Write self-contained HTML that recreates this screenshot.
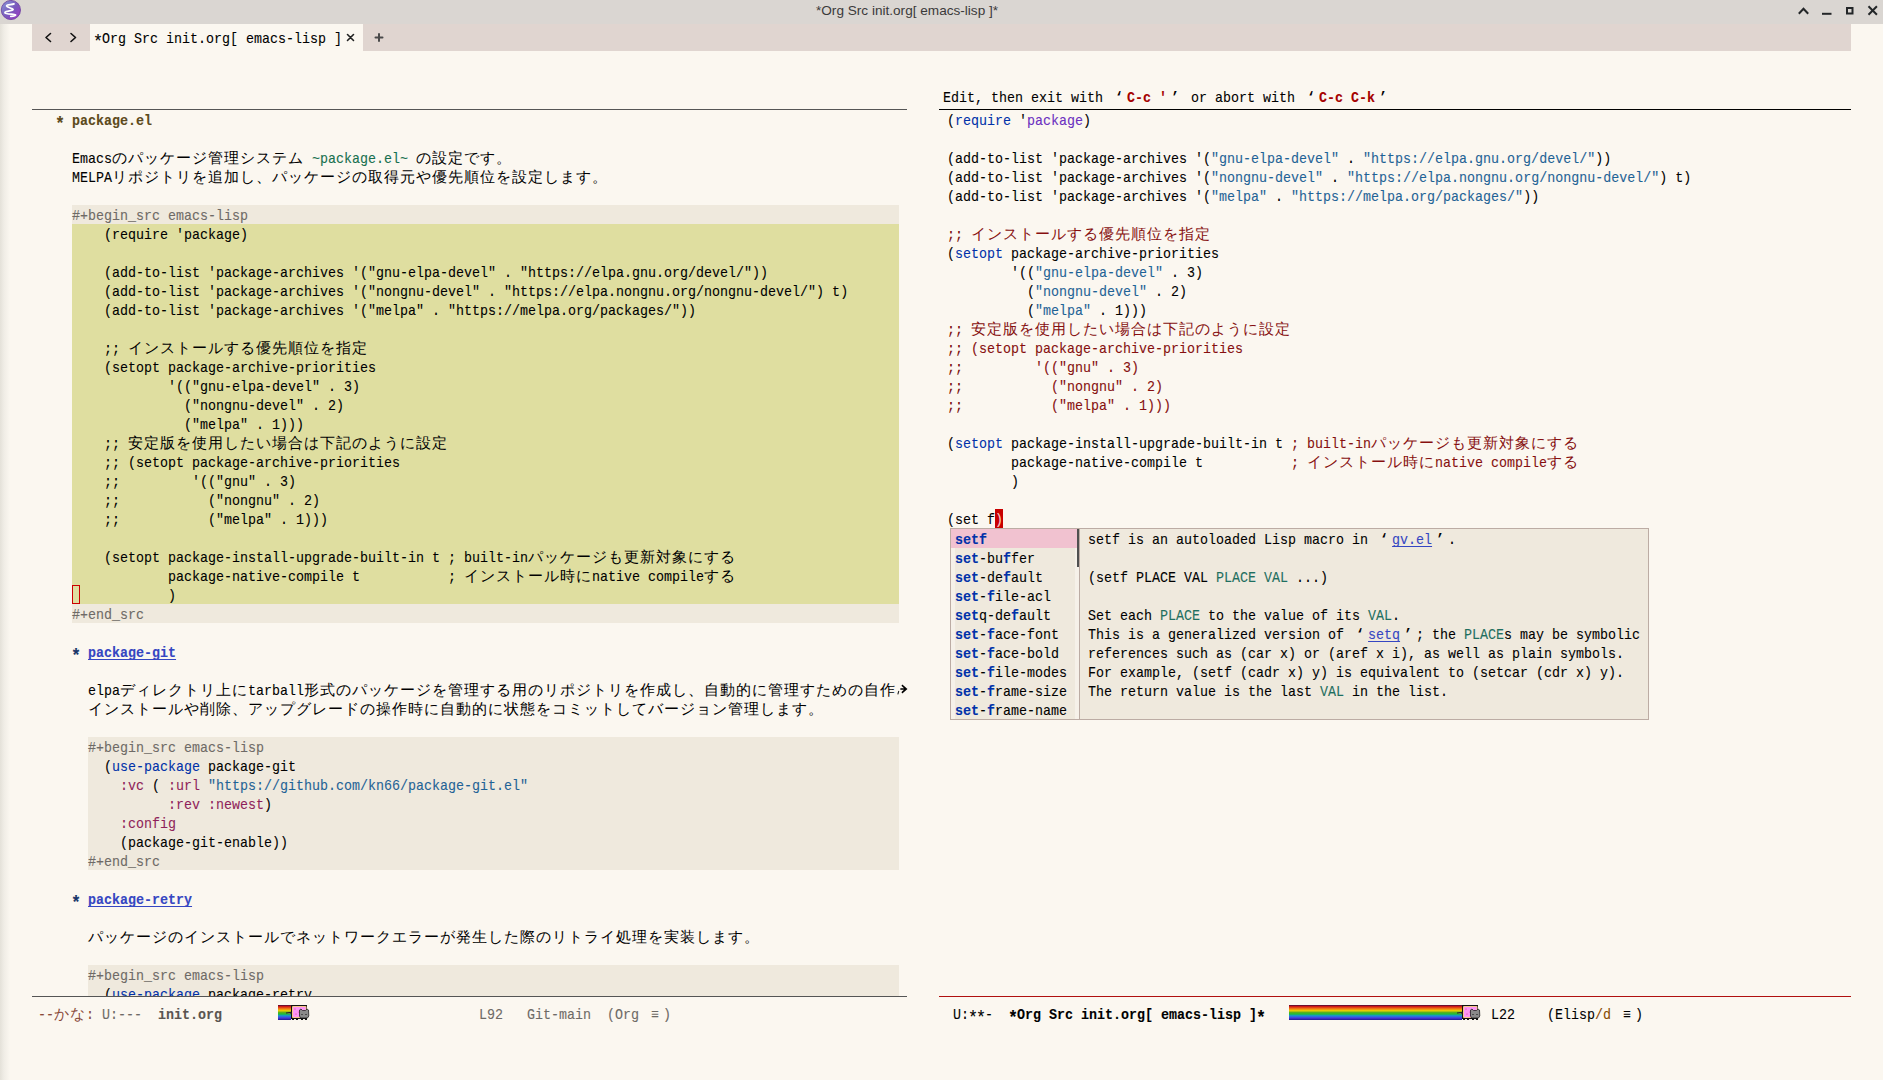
<!DOCTYPE html><html lang="ja"><head><meta charset="utf-8"><style>
*{margin:0;padding:0;box-sizing:border-box}
html,body{width:1883px;height:1080px;overflow:hidden;background:#fbf7f0}
body{position:relative;font-family:"Liberation Mono",monospace;font-size:15px;letter-spacing:0px;color:#000}
.abs{position:absolute}
.r{position:absolute;white-space:pre;height:19px;line-height:19px;padding-top:2px;transform:scaleX(0.888889);transform-origin:0 0;-webkit-text-stroke-width:0.1px}
.w{display:inline-block;width:18px;font-size:14.5px;letter-spacing:0;text-align:left;transform:scaleX(1.125);transform-origin:0 0;-webkit-text-stroke-width:0}
.ql{text-align:center;font-size:15px;transform:none}
.qr{text-align:center;font-size:15px;transform:none}
.qc{text-align:center;font-size:15px;transform:none}
.ql,.qr{font-weight:bold}
.h1s{color:#5d4a1c;font-weight:bold}
.star{display:inline-block;transform:translateY(3.5px) scale(1.25);transform-origin:50% 50%}
.h1{color:#5d4a1c;font-weight:bold}
.h1s2{color:#193668;font-weight:bold}
.h2{color:#3546c2;font-weight:bold;text-decoration:underline;text-decoration-skip-ink:none;text-underline-offset:2px}
.ver{color:#17704f}
.meta{color:#6e6a66}
.kw{color:#0031a9}
.sym{color:#6b2fc0}
.str{color:#1f6396}
.cst{color:#8f1f5a}
.cd{color:#7a0c0c}
.cm{color:#860f0f}
.cur{color:#f7c8c8}

.m{color:#0031a9;font-weight:bold}
.lnk{color:#3546c2;text-decoration:underline;text-decoration-skip-ink:none;text-underline-offset:2px}
.arg{color:#1f6f5f}
.key{color:#a60000;font-weight:bold}
.mlk{color:#8a4a3a}
.mli{color:#6e6a66}
.mlb{color:#5a5450;font-weight:bold}
.mlB{color:#000;font-weight:bold}
.mlY{color:#884900}
</style></head><body>
<div class="abs" style="left:0;top:0;width:1883px;height:24px;background:#dad6d2"></div>
<div class="abs" style="left:0;top:24px;width:10px;height:1056px;background:linear-gradient(to right,#e4e1d9,#f0ede6 40%,#fbf7f0)"></div>
<div class="abs" style="left:32px;top:24px;width:1819px;height:27px;background:#e0d5d0"></div>
<div class="abs" style="left:90px;top:24px;width:273px;height:27px;background:#fbf7f0"></div>
<div class="r" style="left:94px;top:28px"><span class="star">*</span>Org Src init.org[ emacs-lisp ]</div>
<div class="abs" style="left:32px;top:109px;width:875px;height:1px;background:#555"></div>
<div class="abs" style="left:939px;top:109px;width:912px;height:1px;background:#000"></div>
<div class="abs" style="left:72px;top:205px;width:827px;height:19px;background:#efe9dd"></div>
<div class="abs" style="left:72px;top:224px;width:827px;height:380px;background:#dfdea0"></div>
<div class="abs" style="left:72px;top:604px;width:827px;height:19px;background:#efe9dd"></div>
<div class="abs" style="left:88px;top:737px;width:811px;height:133px;background:#efe9dd"></div>
<div class="abs" style="left:88px;top:965px;width:811px;height:31px;background:#efe9dd"></div>
<div class="abs" style="left:72px;top:585px;width:8px;height:19px;border:1px solid #c00"></div>
<div class="abs" style="left:0;top:0;width:907px;height:996px;overflow:hidden">
<div class="r" style="left:56px;top:110px"><span class="h1s"><span class="star">*</span></span> <span class="h1">package.el</span></div>
<div class="r" style="left:72px;top:148px">Emacs<span class="w">の</span><span class="w">パ</span><span class="w">ッ</span><span class="w">ケ</span><span class="w">ー</span><span class="w">ジ</span><span class="w">管</span><span class="w">理</span><span class="w">シ</span><span class="w">ス</span><span class="w">テ</span><span class="w">ム</span> <span class="ver">~package.el~</span> <span class="w">の</span><span class="w">設</span><span class="w">定</span><span class="w">で</span><span class="w">す</span><span class="w">。</span></div>
<div class="r" style="left:72px;top:167px">MELPA<span class="w">リ</span><span class="w">ポ</span><span class="w">ジ</span><span class="w">ト</span><span class="w">リ</span><span class="w">を</span><span class="w">追</span><span class="w">加</span><span class="w">し</span><span class="w">、</span><span class="w">パ</span><span class="w">ッ</span><span class="w">ケ</span><span class="w">ー</span><span class="w">ジ</span><span class="w">の</span><span class="w">取</span><span class="w">得</span><span class="w">元</span><span class="w">や</span><span class="w">優</span><span class="w">先</span><span class="w">順</span><span class="w">位</span><span class="w">を</span><span class="w">設</span><span class="w">定</span><span class="w">し</span><span class="w">ま</span><span class="w">す</span><span class="w">。</span></div>
<div class="r" style="left:72px;top:205px"><span class="meta">#+begin_src emacs-lisp</span></div>
<div class="r" style="left:72px;top:224px">    (require 'package)</div>
<div class="r" style="left:72px;top:262px">    (add-to-list 'package-archives '("gnu-elpa-devel" . "https://elpa.gnu.org/devel/"))</div>
<div class="r" style="left:72px;top:281px">    (add-to-list 'package-archives '("nongnu-devel" . "https://elpa.nongnu.org/nongnu-devel/") t)</div>
<div class="r" style="left:72px;top:300px">    (add-to-list 'package-archives '("melpa" . "https://melpa.org/packages/"))</div>
<div class="r" style="left:72px;top:338px">    ;; <span class="w">イ</span><span class="w">ン</span><span class="w">ス</span><span class="w">ト</span><span class="w">ー</span><span class="w">ル</span><span class="w">す</span><span class="w">る</span><span class="w">優</span><span class="w">先</span><span class="w">順</span><span class="w">位</span><span class="w">を</span><span class="w">指</span><span class="w">定</span></div>
<div class="r" style="left:72px;top:357px">    (setopt package-archive-priorities</div>
<div class="r" style="left:72px;top:376px">            '(("gnu-elpa-devel" . 3)</div>
<div class="r" style="left:72px;top:395px">              ("nongnu-devel" . 2)</div>
<div class="r" style="left:72px;top:414px">              ("melpa" . 1)))</div>
<div class="r" style="left:72px;top:433px">    ;; <span class="w">安</span><span class="w">定</span><span class="w">版</span><span class="w">を</span><span class="w">使</span><span class="w">用</span><span class="w">し</span><span class="w">た</span><span class="w">い</span><span class="w">場</span><span class="w">合</span><span class="w">は</span><span class="w">下</span><span class="w">記</span><span class="w">の</span><span class="w">よ</span><span class="w">う</span><span class="w">に</span><span class="w">設</span><span class="w">定</span></div>
<div class="r" style="left:72px;top:452px">    ;; (setopt package-archive-priorities</div>
<div class="r" style="left:72px;top:471px">    ;;         '(("gnu" . 3)</div>
<div class="r" style="left:72px;top:490px">    ;;           ("nongnu" . 2)</div>
<div class="r" style="left:72px;top:509px">    ;;           ("melpa" . 1)))</div>
<div class="r" style="left:72px;top:547px">    (setopt package-install-upgrade-built-in t ; built-in<span class="w">パ</span><span class="w">ッ</span><span class="w">ケ</span><span class="w">ー</span><span class="w">ジ</span><span class="w">も</span><span class="w">更</span><span class="w">新</span><span class="w">対</span><span class="w">象</span><span class="w">に</span><span class="w">す</span><span class="w">る</span></div>
<div class="r" style="left:72px;top:566px">            package-native-compile t           ; <span class="w">イ</span><span class="w">ン</span><span class="w">ス</span><span class="w">ト</span><span class="w">ー</span><span class="w">ル</span><span class="w">時</span><span class="w">に</span>native compile<span class="w">す</span><span class="w">る</span></div>
<div class="r" style="left:72px;top:585px">            )</div>
<div class="r" style="left:72px;top:604px"><span class="meta">#+end_src</span></div>
<div class="r" style="left:72px;top:642px"><span class="h1s2"><span class="star">*</span></span> <span class="h2">package-git</span></div>
<div class="r" style="left:88px;top:680px">elpa<span class="w">デ</span><span class="w">ィ</span><span class="w">レ</span><span class="w">ク</span><span class="w">ト</span><span class="w">リ</span><span class="w">上</span><span class="w">に</span>tarball<span class="w">形</span><span class="w">式</span><span class="w">の</span><span class="w">パ</span><span class="w">ッ</span><span class="w">ケ</span><span class="w">ー</span><span class="w">ジ</span><span class="w">を</span><span class="w">管</span><span class="w">理</span><span class="w">す</span><span class="w">る</span><span class="w">用</span><span class="w">の</span><span class="w">リ</span><span class="w">ポ</span><span class="w">ジ</span><span class="w">ト</span><span class="w">リ</span><span class="w">を</span><span class="w">作</span><span class="w">成</span><span class="w">し</span><span class="w">、</span><span class="w">自</span><span class="w">動</span><span class="w">的</span><span class="w">に</span><span class="w">管</span><span class="w">理</span><span class="w">す</span><span class="w">た</span><span class="w">め</span><span class="w">の</span><span class="w">自</span><span class="w">作</span></div>
<div class="r" style="left:88px;top:699px"><span class="w">イ</span><span class="w">ン</span><span class="w">ス</span><span class="w">ト</span><span class="w">ー</span><span class="w">ル</span><span class="w">や</span><span class="w">削</span><span class="w">除</span><span class="w">、</span><span class="w">ア</span><span class="w">ッ</span><span class="w">プ</span><span class="w">グ</span><span class="w">レ</span><span class="w">ー</span><span class="w">ド</span><span class="w">の</span><span class="w">操</span><span class="w">作</span><span class="w">時</span><span class="w">に</span><span class="w">自</span><span class="w">動</span><span class="w">的</span><span class="w">に</span><span class="w">状</span><span class="w">態</span><span class="w">を</span><span class="w">コ</span><span class="w">ミ</span><span class="w">ッ</span><span class="w">ト</span><span class="w">し</span><span class="w">て</span><span class="w">バ</span><span class="w">ー</span><span class="w">ジ</span><span class="w">ョ</span><span class="w">ン</span><span class="w">管</span><span class="w">理</span><span class="w">し</span><span class="w">ま</span><span class="w">す</span><span class="w">。</span></div>
<div class="r" style="left:88px;top:737px"><span class="meta">#+begin_src emacs-lisp</span></div>
<div class="r" style="left:88px;top:756px">  (<span class="kw">use-package</span> package-git</div>
<div class="r" style="left:88px;top:775px">    <span class="cst">:vc</span> ( <span class="cst">:url</span> <span class="str">"https://github.com/kn66/package-git.el"</span></div>
<div class="r" style="left:88px;top:794px">          <span class="cst">:rev</span> <span class="cst">:newest</span>)</div>
<div class="r" style="left:88px;top:813px">    <span class="cst">:config</span></div>
<div class="r" style="left:88px;top:832px">    (package-git-enable))</div>
<div class="r" style="left:88px;top:851px"><span class="meta">#+end_src</span></div>
<div class="r" style="left:72px;top:889px"><span class="h1s2"><span class="star">*</span></span> <span class="h2">package-retry</span></div>
<div class="r" style="left:88px;top:927px"><span class="w">パ</span><span class="w">ッ</span><span class="w">ケ</span><span class="w">ー</span><span class="w">ジ</span><span class="w">の</span><span class="w">イ</span><span class="w">ン</span><span class="w">ス</span><span class="w">ト</span><span class="w">ー</span><span class="w">ル</span><span class="w">で</span><span class="w">ネ</span><span class="w">ッ</span><span class="w">ト</span><span class="w">ワ</span><span class="w">ー</span><span class="w">ク</span><span class="w">エ</span><span class="w">ラ</span><span class="w">ー</span><span class="w">が</span><span class="w">発</span><span class="w">生</span><span class="w">し</span><span class="w">た</span><span class="w">際</span><span class="w">の</span><span class="w">リ</span><span class="w">ト</span><span class="w">ラ</span><span class="w">イ</span><span class="w">処</span><span class="w">理</span><span class="w">を</span><span class="w">実</span><span class="w">装</span><span class="w">し</span><span class="w">ま</span><span class="w">す</span><span class="w">。</span></div>
<div class="r" style="left:88px;top:965px"><span class="meta">#+begin_src emacs-lisp</span></div>
<div class="r" style="left:88px;top:984px">  (<span class="kw">use-package</span> package-retry</div>
</div>
<div class="r" style="left:943px;top:87px">Edit, then exit with <span class="w ql">‘</span><span class="key">C-c '</span><span class="w qr">’</span> or abort with <span class="w ql">‘</span><span class="key">C-c C-k</span><span class="w qr">’</span></div>
<div class="abs" style="left:995px;top:509px;width:8px;height:19px;background:#c80000"></div>
<div class="r" style="left:947px;top:110px">(<span class="kw">require</span> '<span class="sym">package</span>)</div>
<div class="r" style="left:947px;top:148px">(add-to-list 'package-archives '(<span class="str">"gnu-elpa-devel"</span> . <span class="str">"https://elpa.gnu.org/devel/"</span>))</div>
<div class="r" style="left:947px;top:167px">(add-to-list 'package-archives '(<span class="str">"nongnu-devel"</span> . <span class="str">"https://elpa.nongnu.org/nongnu-devel/"</span>) t)</div>
<div class="r" style="left:947px;top:186px">(add-to-list 'package-archives '(<span class="str">"melpa"</span> . <span class="str">"https://melpa.org/packages/"</span>))</div>
<div class="r" style="left:947px;top:224px"><span class="cd">;; </span><span class="cm"><span class="w">イ</span><span class="w">ン</span><span class="w">ス</span><span class="w">ト</span><span class="w">ー</span><span class="w">ル</span><span class="w">す</span><span class="w">る</span><span class="w">優</span><span class="w">先</span><span class="w">順</span><span class="w">位</span><span class="w">を</span><span class="w">指</span><span class="w">定</span></span></div>
<div class="r" style="left:947px;top:243px">(<span class="kw">setopt</span> package-archive-priorities</div>
<div class="r" style="left:947px;top:262px">        '((<span class="str">"gnu-elpa-devel"</span> . 3)</div>
<div class="r" style="left:947px;top:281px">          (<span class="str">"nongnu-devel"</span> . 2)</div>
<div class="r" style="left:947px;top:300px">          (<span class="str">"melpa"</span> . 1)))</div>
<div class="r" style="left:947px;top:319px"><span class="cd">;; </span><span class="cm"><span class="w">安</span><span class="w">定</span><span class="w">版</span><span class="w">を</span><span class="w">使</span><span class="w">用</span><span class="w">し</span><span class="w">た</span><span class="w">い</span><span class="w">場</span><span class="w">合</span><span class="w">は</span><span class="w">下</span><span class="w">記</span><span class="w">の</span><span class="w">よ</span><span class="w">う</span><span class="w">に</span><span class="w">設</span><span class="w">定</span></span></div>
<div class="r" style="left:947px;top:338px"><span class="cd">;; </span><span class="cm">(setopt package-archive-priorities</span></div>
<div class="r" style="left:947px;top:357px"><span class="cd">;;</span><span class="cm">         '(("gnu" . 3)</span></div>
<div class="r" style="left:947px;top:376px"><span class="cd">;;</span><span class="cm">           ("nongnu" . 2)</span></div>
<div class="r" style="left:947px;top:395px"><span class="cd">;;</span><span class="cm">           ("melpa" . 1)))</span></div>
<div class="r" style="left:947px;top:433px">(<span class="kw">setopt</span> package-install-upgrade-built-in t <span class="cd">; </span><span class="cm">built-in<span class="w">パ</span><span class="w">ッ</span><span class="w">ケ</span><span class="w">ー</span><span class="w">ジ</span><span class="w">も</span><span class="w">更</span><span class="w">新</span><span class="w">対</span><span class="w">象</span><span class="w">に</span><span class="w">す</span><span class="w">る</span></span></div>
<div class="r" style="left:947px;top:452px">        package-native-compile t           <span class="cd">; </span><span class="cm"><span class="w">イ</span><span class="w">ン</span><span class="w">ス</span><span class="w">ト</span><span class="w">ー</span><span class="w">ル</span><span class="w">時</span><span class="w">に</span>native compile<span class="w">す</span><span class="w">る</span></span></div>
<div class="r" style="left:947px;top:471px">        )</div>
<div class="r" style="left:947px;top:509px">(set f<span class="cur">)</span></div>
<div class="abs" style="left:950px;top:528px;width:699px;height:192px;background:#efe9dd;border:1px solid #bcaca4"></div>
<div class="abs" style="left:951px;top:529px;width:4px;height:190px;background:#f6f1e9"></div>
<div class="abs" style="left:1075px;top:529px;width:4px;height:190px;background:#f6f1e9"></div>
<div class="abs" style="left:951px;top:529px;width:126px;height:19px;background:#f1c2d0"></div>
<div class="abs" style="left:1077px;top:529px;width:2px;height:38px;background:#505050"></div>
<div class="abs" style="left:1079px;top:528px;width:1px;height:192px;background:#bcaca4"></div>
<div class="r" style="left:955px;top:529px"><span class="m">setf</span></div>
<div class="r" style="left:955px;top:548px"><span class="m">set</span>-bu<span class="m">f</span>fer</div>
<div class="r" style="left:955px;top:567px"><span class="m">set</span>-de<span class="m">f</span>ault</div>
<div class="r" style="left:955px;top:586px"><span class="m">set</span>-<span class="m">f</span>ile-acl</div>
<div class="r" style="left:955px;top:605px"><span class="m">set</span>q-de<span class="m">f</span>ault</div>
<div class="r" style="left:955px;top:624px"><span class="m">set</span>-<span class="m">f</span>ace-font</div>
<div class="r" style="left:955px;top:643px"><span class="m">set</span>-<span class="m">f</span>ace-bold</div>
<div class="r" style="left:955px;top:662px"><span class="m">set</span>-<span class="m">f</span>ile-modes</div>
<div class="r" style="left:955px;top:681px"><span class="m">set</span>-<span class="m">f</span>rame-size</div>
<div class="r" style="left:955px;top:700px"><span class="m">set</span>-<span class="m">f</span>rame-name</div>
<div class="r" style="left:1088px;top:529px">setf is an autoloaded Lisp macro in <span class="w ql">‘</span><span class="lnk">gv.el</span><span class="w qr">’</span>.</div>
<div class="r" style="left:1088px;top:567px">(setf PLACE VAL <span class="arg">PLACE</span> <span class="arg">VAL</span> ...)</div>
<div class="r" style="left:1088px;top:605px">Set each <span class="arg">PLACE</span> to the value of its <span class="arg">VAL</span>.</div>
<div class="r" style="left:1088px;top:624px">This is a generalized version of <span class="w ql">‘</span><span class="lnk">setq</span><span class="w qr">’</span>; the <span class="arg">PLACE</span>s may be symbolic</div>
<div class="r" style="left:1088px;top:643px">references such as (car x) or (aref x i), as well as plain symbols.</div>
<div class="r" style="left:1088px;top:662px">For example, (setf (cadr x) y) is equivalent to (setcar (cdr x) y).</div>
<div class="r" style="left:1088px;top:681px">The return value is the last <span class="arg">VAL</span> in the list.</div>
<div class="abs" style="left:0;top:0;width:1883px;height:24px;font-family:&quot;Liberation Sans&quot;,sans-serif;font-size:13.6px;line-height:24px;color:#3a3a3a;text-align:center;padding-left:0px"><span style="position:absolute;left:816px;top:-1px;white-space:pre">*Org Src init.org[ emacs-lisp ]*</span></div>
<svg class="abs" style="left:0;top:0" width="24" height="24" viewBox="0 0 24 24">
<defs><linearGradient id="eg" x1="0.1" y1="0.1" x2="0.9" y2="0.9"><stop offset="0" stop-color="#8590d2"/><stop offset="0.55" stop-color="#7a58bc"/><stop offset="1" stop-color="#9a3ec4"/></linearGradient></defs>
<circle cx="10.9" cy="10" r="9.6" fill="url(#eg)" stroke="#6a3a9e" stroke-width="0.8"/>
<path d="M14 3.9 C11.5 4.9 6.2 4.4 6.6 6 C7 7.6 13.6 8.4 13.1 9.6 C12.6 10.8 4.4 10.9 4.9 12.7 C5.4 14.5 15.8 14 15.6 15.1 C15.4 16 12.5 16.3 10.8 16.4" fill="none" stroke="#fff" stroke-width="1.75" stroke-linecap="round"/>
</svg>
<svg class="abs" style="left:1790px;top:0" width="93" height="24" viewBox="0 0 93 24">
<g fill="none" stroke="#232628" stroke-width="2" stroke-linecap="square">
<path d="M9.5 13 L13.5 8.8 L17.5 13"/>
<path d="M33 13.8 L40.5 13.8"/>
<rect x="57" y="8" width="5.5" height="5.5"/>
<path d="M79.2 7 L86.2 14 M86.2 7 L79.2 14"/>
</g></svg>
<svg class="abs" style="left:32px;top:24px" width="58" height="27" viewBox="0 0 58 27">
<g fill="none" stroke="#111" stroke-width="1.6" stroke-linecap="round" stroke-linejoin="round">
<path d="M18.5 9.5 L14 13.5 L18.5 17.5"/>
<path d="M39 9.5 L43.5 13.5 L39 17.5"/>
</g></svg>
<svg class="abs" style="left:340px;top:24px" width="60" height="27" viewBox="0 0 60 27">
<g fill="none" stroke-linecap="round">
<path d="M7.5 10.5 L13.5 16.5 M13.5 10.5 L7.5 16.5" stroke="#222" stroke-width="1.6"/>
<path d="M35.5 13.5 L42.5 13.5 M39 10 L39 17" stroke="#4a4a4a" stroke-width="2"/>
</g></svg>
<svg class="abs" style="left:899px;top:683px;overflow:visible" width="10" height="12" viewBox="0 0 10 12">
<path d="M3.6 2.8 L7.2 6 L3.6 9.2 M2.2 6 L6.8 6" fill="none" stroke="#000" stroke-width="1.7" stroke-linecap="square"/><path d="M-0.2 8 L-1.2 11.3" stroke="#222" stroke-width="1.1"/></svg>
<svg class="abs" style="left:278px;top:1005px" width="33" height="15" viewBox="0 0 33 15"><defs><linearGradient id="rb278" x1="0" y1="0" x2="0" y2="1"><stop offset="0" stop-color="#3a0a3a"/><stop offset="0.1" stop-color="#d01818"/><stop offset="0.25" stop-color="#f07a10"/><stop offset="0.38" stop-color="#ecd200"/><stop offset="0.5" stop-color="#5ab020"/><stop offset="0.6" stop-color="#20c030"/><stop offset="0.72" stop-color="#1890d8"/><stop offset="0.86" stop-color="#4a3ae0"/><stop offset="1" stop-color="#1a1a8a"/></linearGradient></defs><rect x="0" y="0" width="13" height="15" fill="url(#rb278)"/><rect x="13" y="0" width="16" height="14" fill="#111"/><rect x="14" y="1" width="14.5" height="12" rx="1" fill="#f4c58a"/><rect x="15" y="2" width="12.5" height="10" fill="#fb94f5"/><circle cx="17" cy="4" r="0.6" fill="#e0308a"/><circle cx="21" cy="7" r="0.6" fill="#e0308a"/><circle cx="18" cy="9" r="0.6" fill="#e0308a"/><path d="M21.5 5 L23 4 L24.5 5.5 L27.5 5.5 L29 4 L30.5 5 L30.8 11 L29.5 13 L22.5 13 L21.5 11 Z" fill="#8a8a8a" stroke="#222" stroke-width="0.8"/><rect x="23.5" y="9" width="1" height="1" fill="#111"/><rect x="27.5" y="9" width="1" height="1" fill="#111"/><rect x="14" y="13" width="2" height="2" fill="#111"/><rect x="18" y="13" width="2" height="2" fill="#111"/><rect x="23" y="13" width="2" height="2" fill="#111"/><rect x="27" y="13" width="2" height="2" fill="#111"/><path d="M8 8 L13 7.5 L13 9" stroke="#222" stroke-width="1.2" fill="#9a9a9a"/></svg>
<svg class="abs" style="left:1289px;top:1005px" width="193" height="15" viewBox="0 0 193 15"><defs><linearGradient id="rb1289" x1="0" y1="0" x2="0" y2="1"><stop offset="0" stop-color="#3a0a3a"/><stop offset="0.1" stop-color="#d01818"/><stop offset="0.25" stop-color="#f07a10"/><stop offset="0.38" stop-color="#ecd200"/><stop offset="0.5" stop-color="#5ab020"/><stop offset="0.6" stop-color="#20c030"/><stop offset="0.72" stop-color="#1890d8"/><stop offset="0.86" stop-color="#4a3ae0"/><stop offset="1" stop-color="#1a1a8a"/></linearGradient></defs><rect x="0" y="0" width="173" height="15" fill="url(#rb1289)"/><rect x="173" y="0" width="16" height="14" fill="#111"/><rect x="174" y="1" width="14.5" height="12" rx="1" fill="#f4c58a"/><rect x="175" y="2" width="12.5" height="10" fill="#fb94f5"/><circle cx="177" cy="4" r="0.6" fill="#e0308a"/><circle cx="181" cy="7" r="0.6" fill="#e0308a"/><circle cx="178" cy="9" r="0.6" fill="#e0308a"/><path d="M181.5 5 L183 4 L184.5 5.5 L187.5 5.5 L189 4 L190.5 5 L190.8 11 L189.5 13 L182.5 13 L181.5 11 Z" fill="#8a8a8a" stroke="#222" stroke-width="0.8"/><rect x="183.5" y="9" width="1" height="1" fill="#111"/><rect x="187.5" y="9" width="1" height="1" fill="#111"/><rect x="174" y="13" width="2" height="2" fill="#111"/><rect x="178" y="13" width="2" height="2" fill="#111"/><rect x="183" y="13" width="2" height="2" fill="#111"/><rect x="187" y="13" width="2" height="2" fill="#111"/><path d="M168 8 L173 7.5 L173 9" stroke="#222" stroke-width="1.2" fill="#9a9a9a"/></svg>
<div class="abs" style="left:32px;top:996px;width:875px;height:1px;background:#555"></div>
<div class="abs" style="left:939px;top:996px;width:912px;height:1px;background:#b01010"></div>
<div class="r" style="left:38px;top:1004px"><span class="mlk">--<span class="w">か</span><span class="w">な</span>:</span> <span class="mli">U:---</span>  <span class="mlb">init.org</span></div>
<div class="r" style="left:479px;top:1004px"><span class="mli">L92   Git-main  (Org <span class="w qc">≡</span>)</span></div>
<div class="r" style="left:953px;top:1004px">U:<span class="star">*</span><span class="star">*</span>-  <span class="mlB"><span class="star">*</span>Org Src init.org[ emacs-lisp ]<span class="star">*</span></span></div>
<div class="r" style="left:1491px;top:1004px">L22    (Elisp<span class="mlY">/d</span> <span class="w qc">≡</span>)</div>
</body></html>
